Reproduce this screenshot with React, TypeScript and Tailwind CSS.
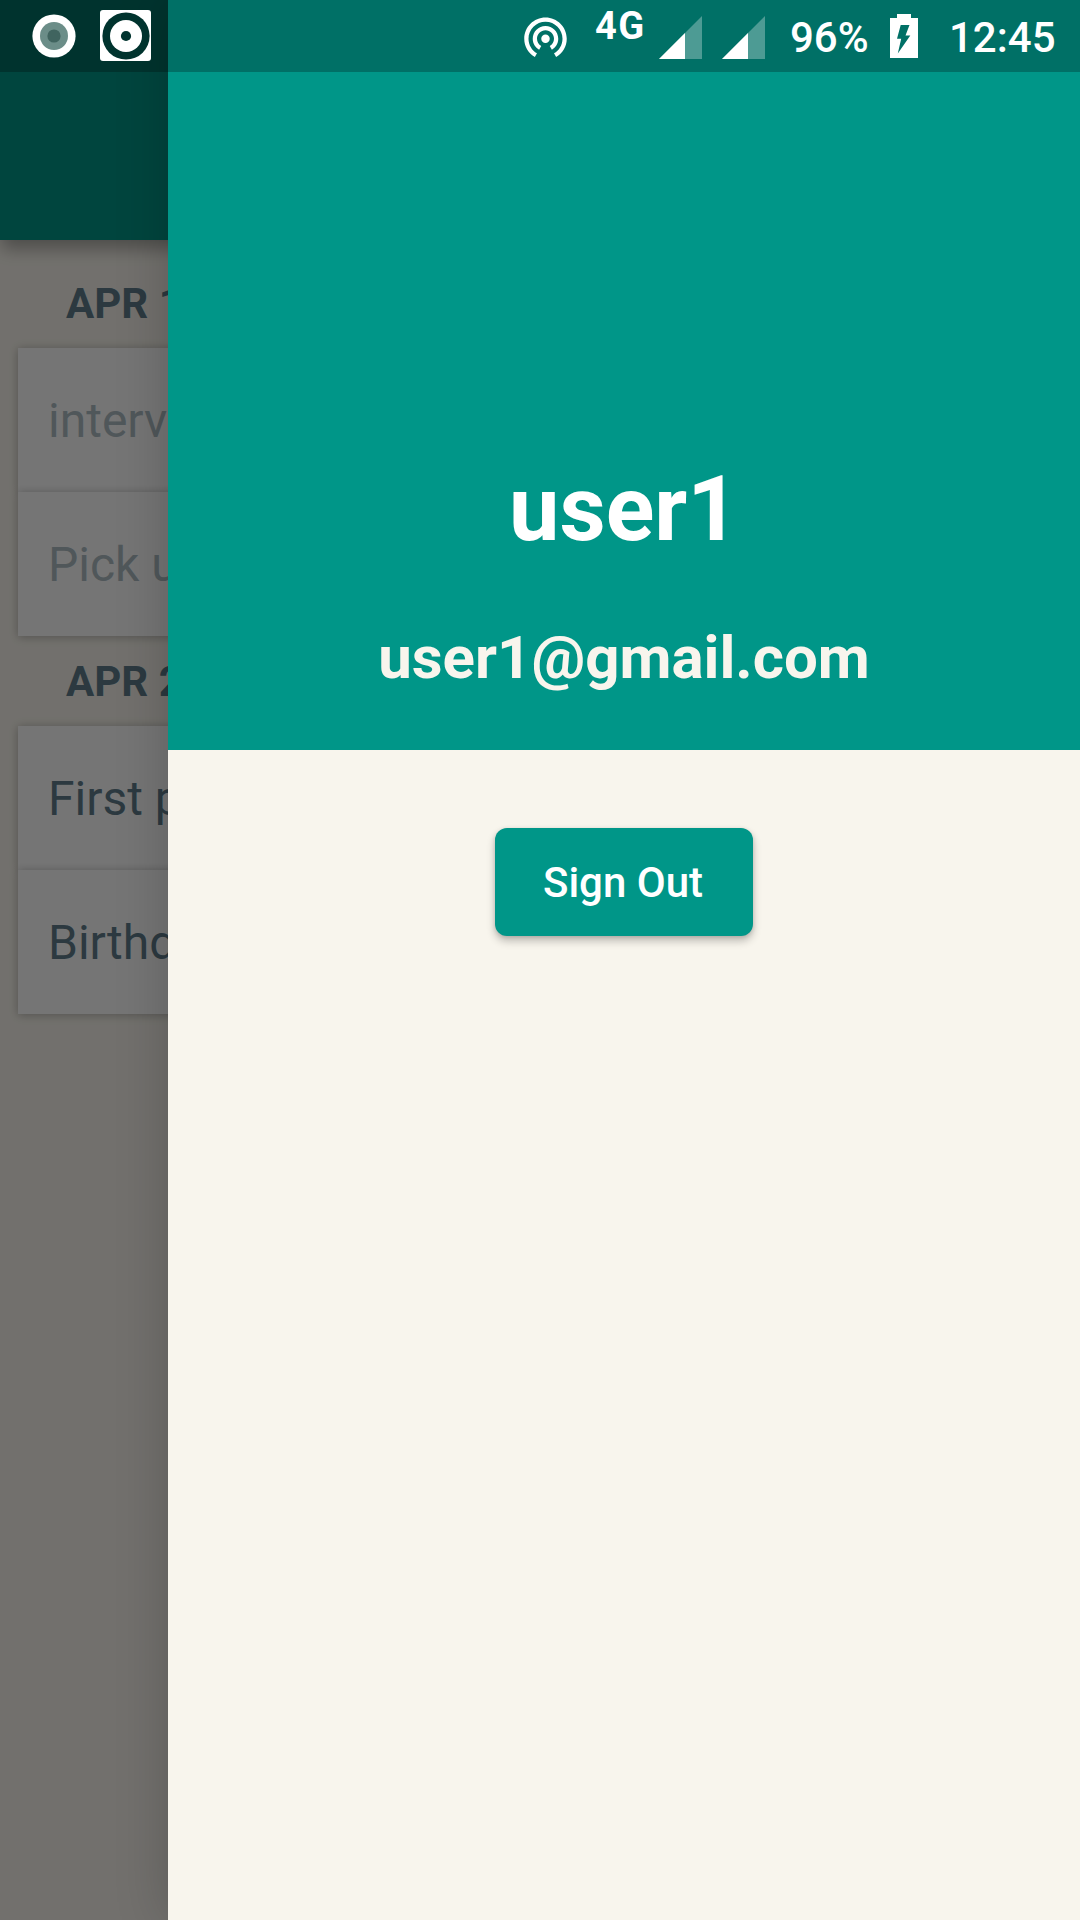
import React from "react";

type Task = { label: string; done: boolean };

const groups: { date: string; tasks: Task[] }[] = [
  {
    date: "APR 19",
    tasks: [
      { label: "interview", done: true },
      { label: "Pick up", done: true },
    ],
  },
  {
    date: "APR 20",
    tasks: [
      { label: "First project", done: false },
      { label: "Birthday", done: false },
    ],
  },
];

function TaskRow({ label, done }: Task) {
  return (
    <li className="relative flex h-36 items-center bg-white pt-0.5 pl-[30px] text-5xl leading-none whitespace-nowrap text-[#607d8b] shadow-[0_2px_9px_rgba(0,0,0,0.14),0_0_9px_rgba(0,0,0,0.14)]">
      <span className={done ? "opacity-50" : "opacity-100"}>{label}</span>
    </li>
  );
}

function TaskList() {
  return (
    <main className="flex h-full flex-col">
      <header className="relative h-60 shrink-0 bg-[#009688] shadow-[0_12px_15px_-3px_rgba(0,0,0,0.2),0_6px_20px_rgba(0,0,0,0.16)]" />
      <div className="flex flex-col pt-[18px]">
        {groups.map((group) => (
          <section key={group.date}>
            <h2 className="flex h-[90px] items-center pt-0.5 pl-[66px] text-[42px] leading-none font-bold whitespace-nowrap text-[#607d8b]">
              {group.date}
            </h2>
            <ul className="mx-[18px]">
              {group.tasks.map((task) => (
                <TaskRow key={task.label} {...task} />
              ))}
            </ul>
          </section>
        ))}
      </div>
    </main>
  );
}

function Drawer() {
  return (
    <aside className="absolute inset-y-0 right-0 flex w-[912px] flex-col bg-[#f8f5ed] shadow-[0_0_50px_rgba(0,0,0,0.2)]">
      <div className="flex h-[750px] shrink-0 flex-col items-center justify-end bg-[#009688] pb-[57px] font-bold">
        <p className="mb-[60px] text-[90px] leading-[106px] text-white">user1</p>
        <p className="text-[60px] leading-[70px] text-[#f8f5ed]">user1@gmail.com</p>
      </div>
      <button className="mt-[78px] flex h-[108px] w-[258px] items-center justify-center self-center rounded-xl bg-[#009688] pt-0.5 pr-0.5 text-[42px] leading-none font-medium text-white shadow-[0_5px_8px_rgba(0,0,0,0.24),0_1px_4px_rgba(0,0,0,0.12)]">
        Sign Out
      </button>
    </aside>
  );
}

function RecordIcon() {
  return (
    <svg className="h-11 w-11" viewBox="0 0 44 44">
      <circle cx="22" cy="22" r="21.6" fill="#fff" />
      <circle cx="22" cy="22" r="14" fill="#6b8d88" />
      <circle cx="22" cy="22" r="6.6" fill="#40645f" />
    </svg>
  );
}

function DiscIcon() {
  return (
    <svg className="ml-6 h-[51px] w-[51px]" viewBox="0 0 51 51">
      <rect width="51" height="51" rx="3" fill="#fff" />
      <circle cx="26" cy="26" r="23.6" fill="#00332e" />
      <circle cx="26" cy="26" r="16" fill="#fff" />
      <circle cx="26" cy="26" r="5.1" fill="#00332e" />
    </svg>
  );
}

function HotspotIcon() {
  return (
    <svg className="ml-px h-[51px] w-[51px]" viewBox="0 0 24 24" fill="#fff">
      <path d="M12 11c-1.1 0-2 .9-2 2s.9 2 2 2 2-.9 2-2-.9-2-2-2zm6 2c0-3.31-2.69-6-6-6s-6 2.69-6 6c0 2.22 1.21 4.15 3 5.19l1-1.74c-1.19-.7-2-1.97-2-3.45 0-2.21 1.79-4 4-4s4 1.79 4 4c0 1.48-.81 2.75-2 3.45l1 1.74c1.79-1.04 3-2.97 3-5.19zM12 3C6.48 3 2 7.48 2 13c0 3.7 2.01 6.92 4.99 8.65l1-1.73C5.61 18.53 4 15.96 4 13c0-4.42 3.58-8 8-8s8 3.58 8 8c0 2.96-1.61 5.53-4 6.92l1 1.73c2.99-1.73 5-4.95 5-8.65 0-5.52-4.48-10-10-10z" />
    </svg>
  );
}

function SignalIcon() {
  return (
    <svg className="mt-4 h-[43px] w-[43px]" viewBox="0 0 43 43" fill="#fff">
      <path d="M0 43L43 0V43Z" opacity="0.3" />
      <path d="M0 43L26 17V43Z" />
    </svg>
  );
}

function BatteryIcon() {
  return (
    <svg className="mt-3.5 h-11 w-7" viewBox="0 0 28 44">
      <path d="M7 0H21V4H28V44H0V4H7Z" fill="#fff" />
      <path d="M10.7 11H19.5L15.5 21.5H20.3L7.8 39.5L11.2 24.8H7Z" fill="#007066" />
    </svg>
  );
}

function StatusBar() {
  return (
    <div className="absolute inset-x-0 top-0 flex h-[72px] items-start justify-between bg-black/25 leading-none font-medium text-white">
      <div className="flex items-start pl-8">
        <div className="mt-3.5">
          <RecordIcon />
        </div>
        <div className="mt-2.5">
          <DiscIcon />
        </div>
      </div>
      <div className="flex w-[561px] items-start">
        <div className="mt-[11px] w-[76px]">
          <HotspotIcon />
        </div>
        <span className="mt-[7px] w-16 text-[38px] leading-[38px] font-bold tracking-[1.4px]">4G</span>
        <div className="w-[63px]">
          <SignalIcon />
        </div>
        <div className="w-[68px]">
          <SignalIcon />
        </div>
        <span className="mt-[13px] w-[100px] text-[42px] leading-[49px]">96%</span>
        <BatteryIcon />
        <span className="mt-[13px] ml-[31px] text-[42px] leading-[49px]">12:45</span>
      </div>
    </div>
  );
}

export default function App() {
  return (
    <div className="relative h-[1920px] w-[1080px] overflow-hidden bg-[#f8f5ed] font-[Roboto,sans-serif]">
      <TaskList />
      <div className="absolute inset-0 bg-black/54" />
      <Drawer />
      <StatusBar />
    </div>
  );
}
